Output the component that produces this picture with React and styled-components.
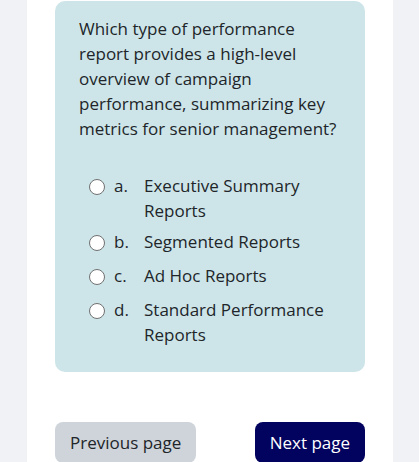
import React from 'react';
import styled, {createGlobalStyle} from 'styled-components';

const GlobalStyle = createGlobalStyle`
  body {
    margin: 0;
    background: #f0f2f5;
    font-family: "Open Sans", "Noto Sans", sans-serif;
    color: #212529;
  }
`;

const Card = styled.main`
  margin: 0 26px 0 27px;
  background: #fff;
  padding: 1px 28px 0;
  min-height: 462px;
  box-sizing: border-box;
`;

const QuestionBox = styled.section`
  background: #cde5e9;
  border-radius: 10px;
  padding: 15px 24px 22px;
`;

const QuestionText = styled.p`
  margin: 0 0 29px;
  font-size: 17px;
  line-height: 25px;
`;

const OptionList = styled.ul`
  list-style: none;
  margin: 0 0 0 10px;
  padding: 0;
`;

const Option = styled.li`
  display: flex;
  align-items: flex-start;
  padding: 3px 0;
  font-size: 17px;
  line-height: 25px;
`;

const Radio = styled.span`
  flex: none;
  width: 16px;
  height: 16px;
  margin: 6px 9px 6px 0;
  box-sizing: border-box;
  border: 1px solid #707070;
  border-radius: 50%;
  background: #fff;
`;

const Letter = styled.span`
  flex: none;
  width: 30px;
`;

const Label = styled.span`
  flex: 1;
`;

const Nav = styled.nav`
  display: flex;
  justify-content: space-between;
  margin-top: 50px;
`;

const PageButton = styled.button`
  font-family: inherit;
  font-size: 17px;
  line-height: 25px;
  padding: 8px 15px;
  border: none;
  border-radius: 8px;
  cursor: pointer;
  background: ${p => (p.$primary ? '#02025f' : '#ced4da')};
  color: ${p => (p.$primary ? '#fff' : '#212529')};
`;

const options = [
  {key: 'a', text: 'Executive Summary Reports'},
  {key: 'b', text: 'Segmented Reports'},
  {key: 'c', text: 'Ad Hoc Reports'},
  {key: 'd', text: 'Standard Performance Reports'}
];

const App = () => (<>
  <GlobalStyle/>
  <Card>
    <QuestionBox>
      <QuestionText>
        Which type of performance report provides a high-level overview of campaign performance, summarizing key metrics for senior management?
      </QuestionText>
      <OptionList>
        {options.map(o => (
          <Option key={o.key}>
            <Radio/>
            <Letter>{o.key}.</Letter>
            <Label>{o.text}</Label>
          </Option>
        ))}
      </OptionList>
    </QuestionBox>
    <Nav>
      <PageButton>Previous page</PageButton>
      <PageButton $primary>Next page</PageButton>
    </Nav>
  </Card>
</>);

export default App;
